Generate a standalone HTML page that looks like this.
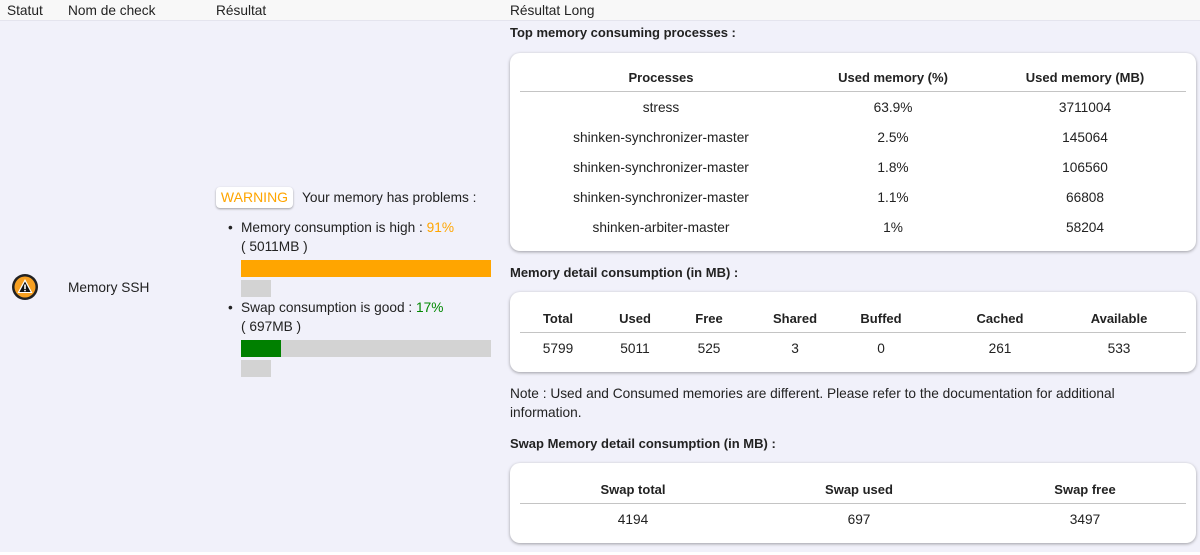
<!DOCTYPE html>
<html><head><meta charset="utf-8"><style>
*{margin:0;padding:0;box-sizing:border-box}
body{width:1200px;height:555px;background:#fff;font-family:"Liberation Sans",sans-serif;font-size:13.7px;color:#222;position:relative;overflow:hidden}
.a{position:absolute;white-space:nowrap}
.hdr{position:absolute;left:0;top:0;width:1200px;height:21px;background:#f8f8f8;border-bottom:1px solid #e4e4ee}
.row{position:absolute;left:0;top:21px;width:1200px;height:531px;background:#f1f1fa}
.card{position:absolute;left:510px;width:686px;background:#fff;border-radius:10px;box-shadow:0 1px 3px rgba(0,0,0,.35)}
.b{font-weight:bold;font-size:13px}
.c{position:absolute;text-align:center;transform:translateX(-50%);white-space:nowrap}
.line{position:absolute;left:10px;right:10px;height:1px;background:#c4c4c4}
.bar{position:absolute;background:#d3d3d3}
</style></head><body>
<div class="hdr"></div>
<div class="a" style="left:7px;top:3px">Statut</div>
<div class="a" style="left:68px;top:3px">Nom de check</div>
<div class="a" style="left:216px;top:3px">Résultat</div>
<div class="a" style="left:510px;top:3px">Résultat Long</div>
<div class="row"></div>

<svg class="a" style="left:11px;top:273px" width="28" height="28" viewBox="0 0 28 28">
<circle cx="14" cy="14" r="13" fill="#222"/><circle cx="14" cy="14" r="10.5" fill="#f7a021"/>
<path d="M14 6 L21.5 20 H6.5 Z" fill="#fff"/><path d="M14 8.5 L19.6 19 H8.4 Z" fill="#111"/>
<rect x="13.2" y="11.5" width="1.6" height="4.5" fill="#fff"/><rect x="13.2" y="16.8" width="1.6" height="1.5" fill="#fff"/>
</svg>
<div class="a" style="left:68px;top:280px">Memory SSH</div>

<div class="a" style="left:216px;top:187px;width:77px;height:21px;background:#fff;border-radius:4px;box-shadow:0 1px 2px rgba(0,0,0,.35);color:#ffa500;font-size:14px;line-height:21px;text-align:center">WARNING</div>
<div class="a" style="left:302px;top:190px">Your memory has problems :</div>
<div class="a" style="left:228px;top:220px">•</div>
<div class="a" style="left:241px;top:220px">Memory consumption is high : <span style="color:#ffa500">91%</span></div>
<div class="a" style="left:241px;top:239px">( 5011MB )</div>
<div class="bar" style="left:241px;top:260px;width:250px;height:17px;background:#ffa500"></div>
<div class="bar" style="left:241px;top:280px;width:30px;height:17px"></div>
<div class="a" style="left:228px;top:300px">•</div>
<div class="a" style="left:241px;top:300px">Swap consumption is good : <span style="color:#080">17%</span></div>
<div class="a" style="left:241px;top:319px">( 697MB )</div>
<div class="bar" style="left:241px;top:340px;width:250px;height:17px"></div>
<div class="bar" style="left:241px;top:340px;width:40px;height:17px;background:#008000"></div>
<div class="bar" style="left:241px;top:360px;width:30px;height:17px"></div>

<div class="a b" style="left:510px;top:25px">Top memory consuming processes :</div>
<div class="card" style="top:53px;height:198px">
<div class="c b" style="left:151px;top:17px">Processes</div>
<div class="c b" style="left:383px;top:17px">Used memory (%)</div>
<div class="c b" style="left:575px;top:17px">Used memory (MB)</div>
<div class="line" style="top:38px"></div>
<div class="c" style="left:151px;top:47px">stress</div><div class="c" style="left:383px;top:47px">63.9%</div><div class="c" style="left:575px;top:47px">3711004</div>
<div class="c" style="left:151px;top:77px">shinken-synchronizer-master</div><div class="c" style="left:383px;top:77px">2.5%</div><div class="c" style="left:575px;top:77px">145064</div>
<div class="c" style="left:151px;top:107px">shinken-synchronizer-master</div><div class="c" style="left:383px;top:107px">1.8%</div><div class="c" style="left:575px;top:107px">106560</div>
<div class="c" style="left:151px;top:137px">shinken-synchronizer-master</div><div class="c" style="left:383px;top:137px">1.1%</div><div class="c" style="left:575px;top:137px">66808</div>
<div class="c" style="left:151px;top:167px">shinken-arbiter-master</div><div class="c" style="left:383px;top:167px">1%</div><div class="c" style="left:575px;top:167px">58204</div>
</div>

<div class="a b" style="left:510px;top:265px">Memory detail consumption (in MB) :</div>
<div class="card" style="top:292px;height:80px">
<div class="c b" style="left:48px;top:19px">Total</div><div class="c b" style="left:125px;top:19px">Used</div><div class="c b" style="left:199px;top:19px">Free</div><div class="c b" style="left:285px;top:19px">Shared</div><div class="c b" style="left:371px;top:19px">Buffed</div><div class="c b" style="left:490px;top:19px">Cached</div><div class="c b" style="left:609px;top:19px">Available</div>
<div class="line" style="top:40px"></div>
<div class="c" style="left:48px;top:49px">5799</div><div class="c" style="left:125px;top:49px">5011</div><div class="c" style="left:199px;top:49px">525</div><div class="c" style="left:285px;top:49px">3</div><div class="c" style="left:371px;top:49px">0</div><div class="c" style="left:490px;top:49px">261</div><div class="c" style="left:609px;top:49px">533</div>
</div>

<div class="a" style="left:510px;top:386px">Note : Used and Consumed memories are different. Please refer to the documentation for additional</div>
<div class="a" style="left:510px;top:405px">information.</div>
<div class="a b" style="left:510px;top:436px">Swap Memory detail consumption (in MB) :</div>
<div class="card" style="top:463px;height:80px">
<div class="c b" style="left:123px;top:19px">Swap total</div><div class="c b" style="left:349px;top:19px">Swap used</div><div class="c b" style="left:575px;top:19px">Swap free</div>
<div class="line" style="top:40px"></div>
<div class="c" style="left:123px;top:49px">4194</div><div class="c" style="left:349px;top:49px">697</div><div class="c" style="left:575px;top:49px">3497</div>
</div>
</body></html>
